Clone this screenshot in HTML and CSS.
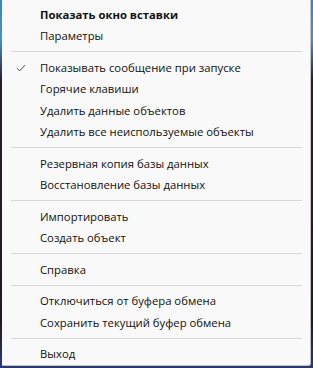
FILE: index.html
```html
<!DOCTYPE html>
<html lang="ru">
<head>
    <meta charset="UTF-8">
    <title>Контекстное меню</title>
    <link rel="stylesheet" href="styles.css">
</head>
<body>
    <div class="menu">
        <div class="item bold">Показать окно вставки</div>
        <div class="item">Параметры</div>
        <div class="sep"></div>
        <div class="item checked">
            <svg class="check" width="10" height="8" viewBox="0 0 10 8"><path d="M1 4.2 L3.6 6.8 L9 1.2" fill="none" stroke="#444" stroke-width="1"/></svg>
            Показывать сообщение при запуске
        </div>
        <div class="item">Горячие клавиши</div>
        <div class="item">Удалить данные объектов</div>
        <div class="item">Удалить все неиспользуемые объекты</div>
        <div class="sep"></div>
        <div class="item">Резервная копия базы данных</div>
        <div class="item">Восстановление базы данных</div>
        <div class="sep"></div>
        <div class="item">Импортировать</div>
        <div class="item">Создать объект</div>
        <div class="sep"></div>
        <div class="item">Справка</div>
        <div class="sep"></div>
        <div class="item">Отключиться от буфера обмена</div>
        <div class="item">Сохранить текущий буфер обмена</div>
        <div class="sep"></div>
        <div class="item">Выход</div>
    </div>
</body>
</html>
```

FILE: styles.css
```css
html, body {
    margin: 0;
    height: 100%;
}
body {
    background: linear-gradient(#3a86c0 0, #4a8fc4 40px, #2a1d2a 80px, #221822 320px, #2c3a70 368px);
    font-family: "Open Sans", "Noto Sans", sans-serif;
    font-size: 11.3px;
    color: #111;
    padding-left: 2px;
    box-sizing: border-box;
    display: flex;
    align-items: flex-start;
}
.menu {
    width: 309px;
    height: 366px;
    box-sizing: border-box;
    background: #f9f9f9;
    border-right: 1px solid #c4c4c4;
    border-bottom: 1px solid #c4c4c4;
    border-bottom-right-radius: 3px;
    padding-top: 3.6px;
}
.item {
    height: 21.6px;
    line-height: 21.6px;
    padding-left: 38px;
    position: relative;
    white-space: nowrap;
}
.bold {
    font-weight: bold;
}
.check {
    position: absolute;
    left: 14px;
    top: 7px;
}
.sep {
    height: 1px;
    background: #d8d8d8;
    margin: 4.4px 8px 4.4px 9px;
}
```
